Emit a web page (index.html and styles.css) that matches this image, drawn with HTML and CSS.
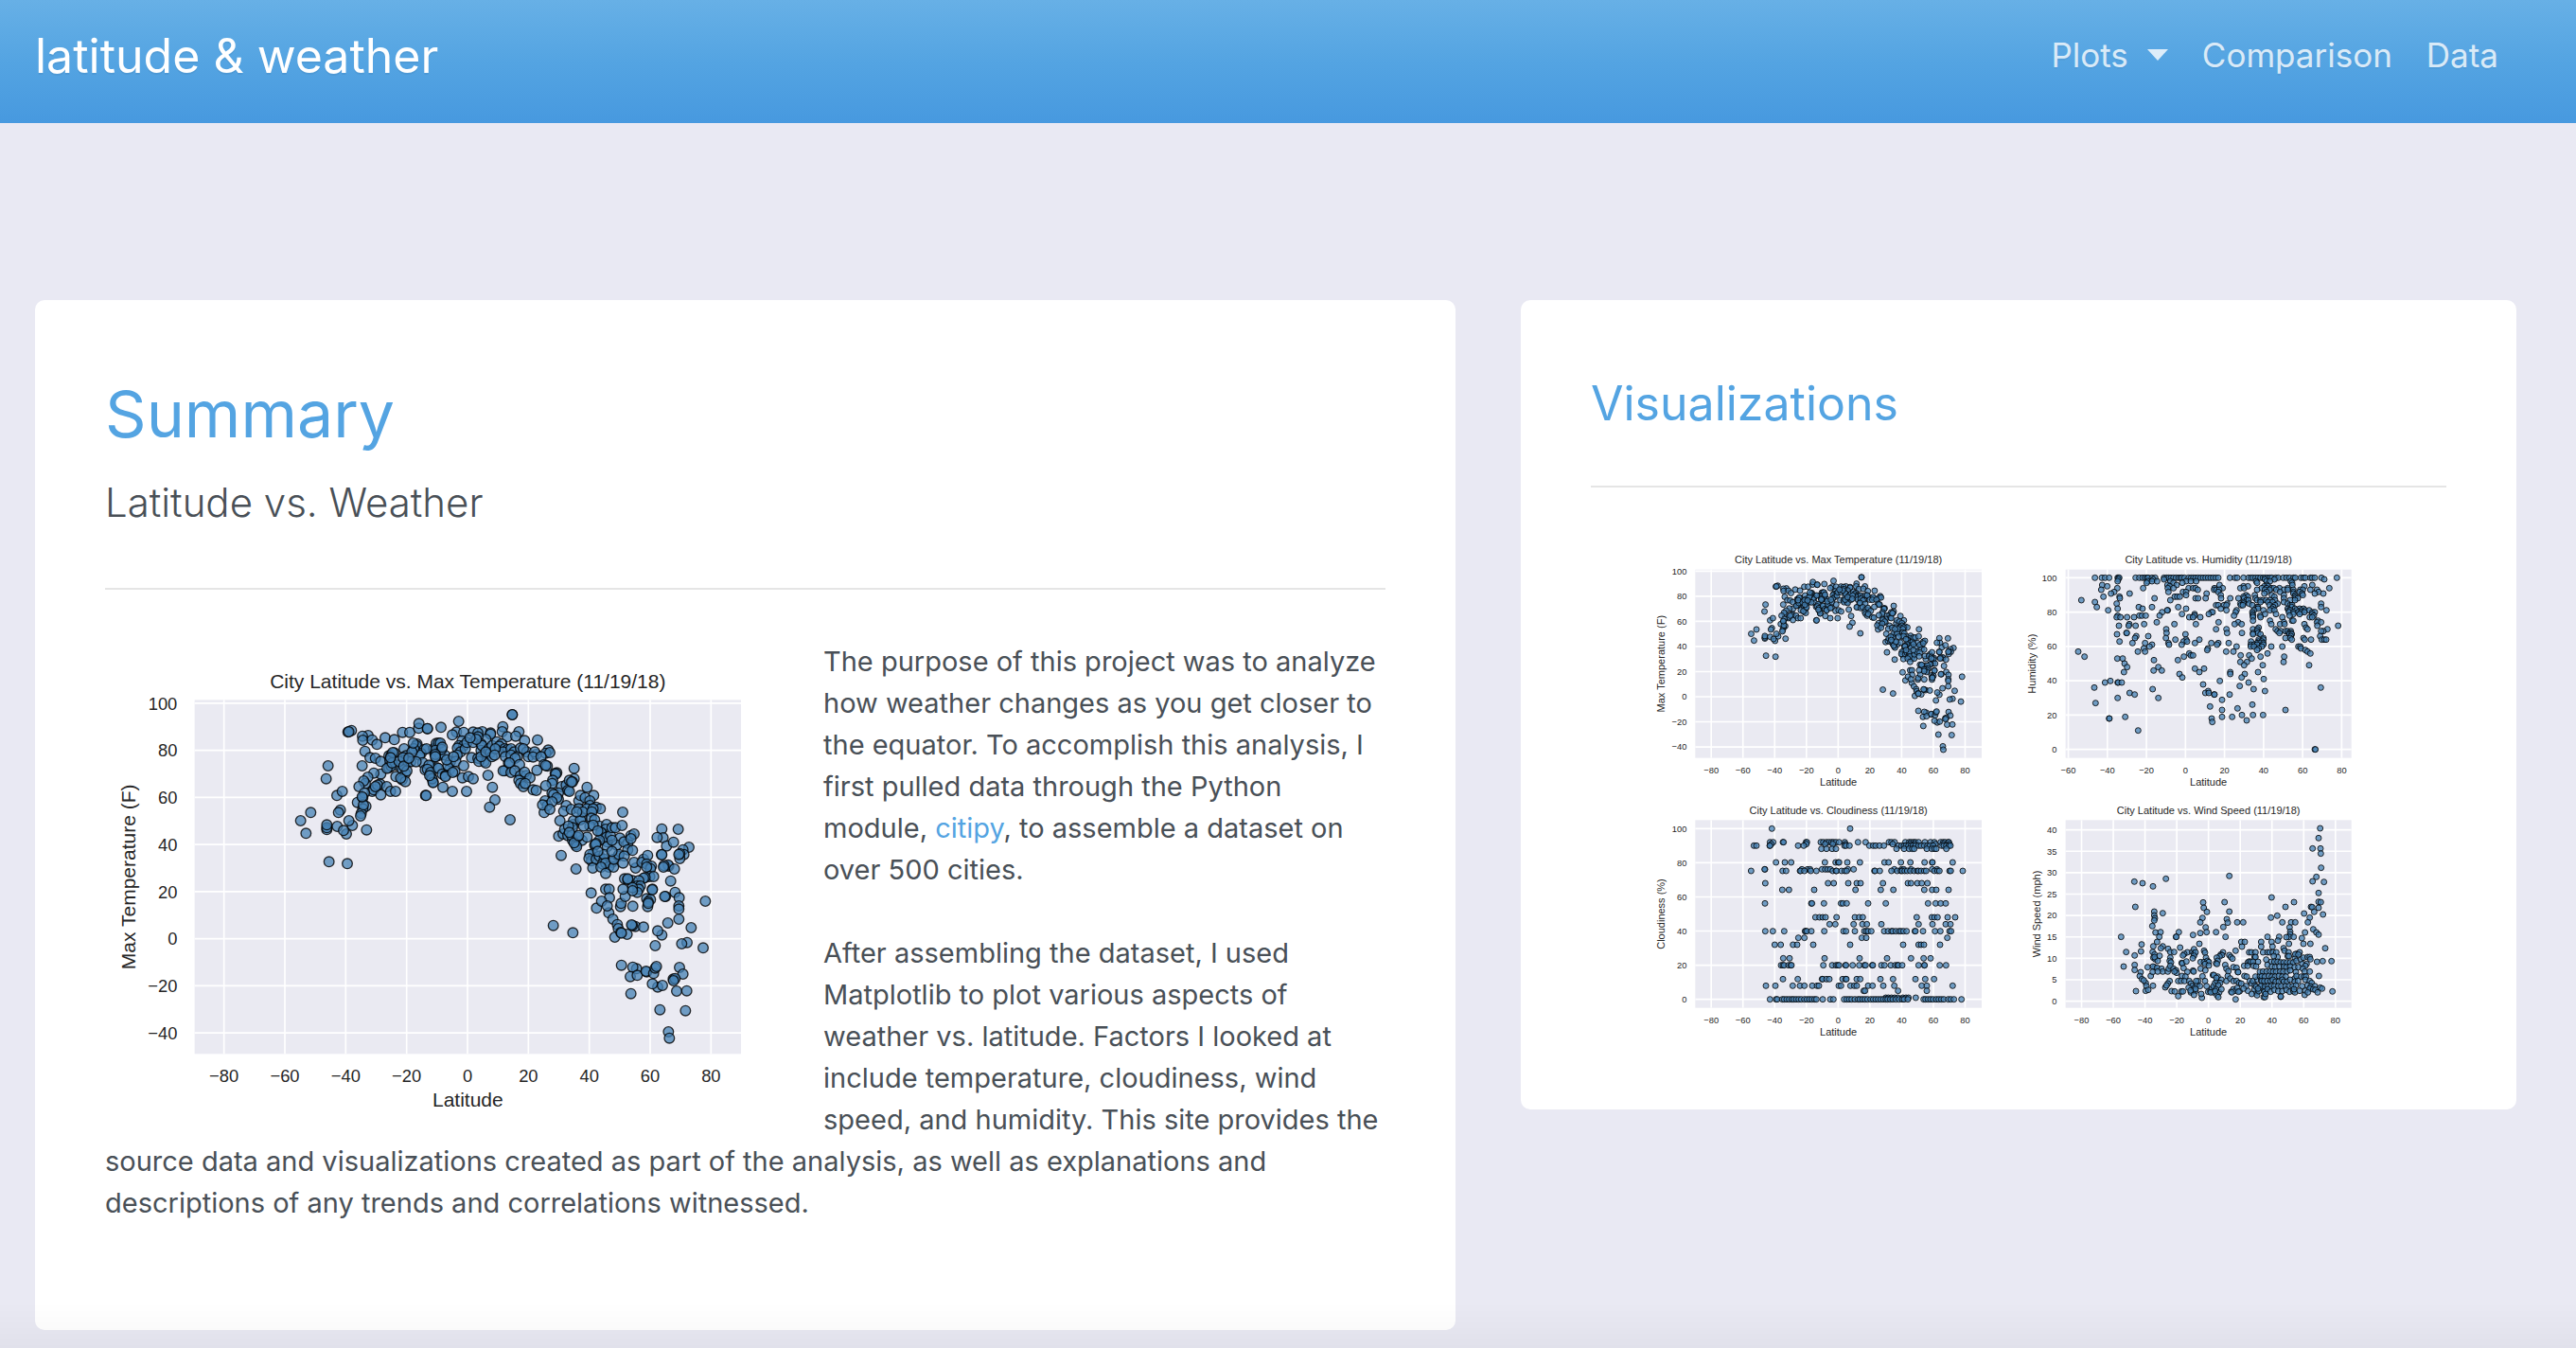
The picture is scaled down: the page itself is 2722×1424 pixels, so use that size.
FILE: index.html
```html
<!DOCTYPE html>
<html lang="en">
<head>
<meta charset="utf-8">
<meta name="viewport" content="width=device-width, initial-scale=1">
<title>latitude &amp; weather</title>
<link rel="stylesheet" href="styles.css">
</head>
<body>
<nav class="navbar">
  <a class="brand" href="#">latitude &amp; weather</a>
  <div class="nav-links">
    <button class="nav-link dropdown" type="button" aria-haspopup="true">Plots<span class="caret"></span></button>
    <a class="nav-link" href="#">Comparison</a>
    <a class="nav-link" href="#">Data</a>
  </div>
</nav>
<main class="columns">
  <section class="card">
    <h1 class="title">Summary</h1>
    <h2 class="subtitle">Latitude vs. Weather</h2>
    <hr class="rule">
    <div class="story">
      <svg class="chart chart-main" data-chart="temperatureLarge" viewBox="33 0 2130 1470" role="img" aria-label="City Latitude vs. Max Temperature"></svg>
      <p class="text">The purpose of this project was to analyze how weather changes as you get closer to the equator. To accomplish this analysis, I first pulled data through the Python module, <a class="link" href="#">citipy</a>, to assemble a dataset on over 500 cities.</p>
      <p class="text">After assembling the dataset, I used Matplotlib to plot various aspects of weather vs. latitude. Factors I looked at include temperature, cloudiness, wind speed, and humidity. This site provides the source data and visualizations created as part of the analysis, as well as explanations and descriptions of any trends and correlations witnessed.</p>
    </div>
  </section>
  <section class="card">
    <h2 class="heading">Visualizations</h2>
    <hr class="rule">
    <div class="gallery">
      <a href="#"><svg class="chart" data-chart="temperature" viewBox="0 0 1110 795" role="img" aria-label="City Latitude vs. Max Temperature"></svg></a>
      <a href="#"><svg class="chart" data-chart="humidity" viewBox="0 0 1110 795" role="img" aria-label="City Latitude vs. Humidity"></svg></a>
      <a href="#"><svg class="chart" data-chart="cloudiness" viewBox="0 0 1110 795" role="img" aria-label="City Latitude vs. Cloudiness"></svg></a>
      <a href="#"><svg class="chart" data-chart="wind" viewBox="0 0 1110 795" role="img" aria-label="City Latitude vs. Wind Speed"></svg></a>
    </div>
  </section>
</main>
<script src="charts.js"></script>
</body>
</html>
```
FILE: styles.css
```css
* { box-sizing: border-box; }

body {
  margin: 0;
  background: #e9e9f3;
  color: #495057;
  font-family: Inter, "Liberation Sans", sans-serif;
  font-size: 29px;
  line-height: 44px;
}

/* Faint shade along the bottom edge of the window */
body::after {
  content: "";
  position: fixed;
  right: 0;
  bottom: 0;
  left: 0;
  height: 48px;
  background: linear-gradient(rgba(0, 0, 0, 0), rgba(0, 0, 0, 0.03));
  pointer-events: none;
}

.navbar {
  display: flex;
  align-items: flex-start;
  justify-content: space-between;
  height: 130px;
  padding: 26px 64px 0 37px;
  background: linear-gradient(#67b0e6, #54a4e2 50%, #4799df);
  text-shadow: 0 2px 0 rgba(0, 0, 0, 0.05);
}

.brand {
  color: #fff;
  font-size: 50px;
  line-height: 66px;
  text-decoration: none;
}

.nav-links { display: flex; }

.nav-link {
  display: flex;
  align-items: center;
  padding: 0 18px;
  border: 0;
  background: none;
  color: rgba(255, 255, 255, 0.8);
  font: inherit;
  font-size: 35px;
  line-height: 64px;
  text-decoration: none;
  text-shadow: inherit;
}

.caret {
  margin-left: 20px;
  border: 11px solid transparent;
  border-top-width: 12px;
  border-top-color: currentColor;
  border-bottom: 0;
}

.columns {
  display: grid;
  grid-template-columns: 1501fr 1052fr;
  gap: 69px;
  align-items: start;
  padding: 187px 63px 20px 37px;
}

.card {
  padding: 72px 74px;
  border-radius: 10px;
  background: #fff;
}

.title, .heading, .subtitle { margin: 0; }

.title {
  color: #54a4e2;
  font-size: 68px;
  font-weight: 400;
  line-height: 96px;
}

.subtitle {
  margin-top: 18px;
  font-size: 42px;
  font-weight: 300;
  line-height: 56px;
}

.heading {
  color: #54a4e2;
  font-size: 50px;
  font-weight: 400;
  line-height: 74px;
}

.rule {
  height: 2px;
  margin: 62px 0 54px;
  border: 0;
  background: #e5e5e5;
}

.heading + .rule { margin: 50px 0 55px; }

.story { padding-bottom: 40px; }

.story::after {
  content: "";
  display: block;
  clear: both;
}

.text { margin: 0 0 44px; }
.text:last-child { margin-bottom: 0; }

.link { color: #54a4e2; text-decoration: none; }

.gallery {
  display: grid;
  grid-template-columns: 1fr 1fr;
  column-gap: 20px;
  padding: 0 85px 0 59px;
}

.chart {
  display: block;
  width: 100%;
  font-family: "Liberation Sans", Arial, sans-serif;
  fill: #262626;
}

.chart-main {
  float: left;
  width: 710px;
  max-width: 55%;
  margin: 14px 49px 10px 0;
}

.plot { fill: #eaeaf2; }
.grid { stroke: #fff; stroke-width: 5; }
.dot { fill: #4682b4; fill: rgba(70, 130, 180, 0.75); stroke: rgba(0, 0, 0, 0.8); stroke-width: 3; }
.chart-title, .axis-title { font-size: 33px; text-anchor: middle; }
.tick { font-size: 28px; }
.tick-x { text-anchor: middle; }
.tick-y { text-anchor: end; }
.chart-main .chart-title, .chart-main .axis-title { font-size: 63px; }
.chart-main .tick { font-size: 55px; }
.chart-main .dot { stroke-width: 4; }
```
FILE: charts.js
```js
// Each point list is "x,y x,y ..." in the units of its chart's viewBox.
const pairs = (text, dx = 0) => text.trim().split(/\s+/).map(p => {
  const [x, y] = p.split(",").map(Number);
  return [x + dx, y];
});
// Rows share one value: "y: x x x".
const rows = text => text.trim().split("\n").flatMap(line => {
  const [y, xs] = line.split(":");
  return xs.trim().split(/\s+/).map(x => [Number(x), Number(y)]);
});

const southern = pairs(`
740,354 734,395 768,448 785,435 685,502 653,528 670,568 779,494 773,502 743,658 801,664 736,556 736,550 736,541
769,546 817,543 806,528 798,570 789,559 862,557 814,242 803,247 806,246 867,258 849,260 850,273 880,272 895,286
921,265 950,271 976,248 999,248 1027,235 1028,220 1055,236 857,308 873,328 890,330 907,340 848,354 933,322 940,320
950,313 936,337 933,360 960,352 981,300 987,322 1018,295 1022,285 1020,290 1045,302 1035,315 1030,320 985,335 990,342
1002,341 1040,344 1019,341 1067,354 907,380 885,377 940,355 927,362 975,365 985,378 955,388 975,398 985,404 970,393
990,370 866,390 858,410 853,402 838,420 880,435 905,412 885,430 897,415 907,446 926,420 938,435 954,435 833,470
855,440 850,455 860,482 850,490 845,505 843,513 852,478 848,452 1048,367 1067,390 1073,406 1049,448 1075,300 1078,315
1082,325 1085,360 943,345 965,340 978,328 1012,300 1006,310 945,312 938,328 1083,283 1010,282 980,355 996,330 890,420`);
const northern = pairs(`
5,236 48,232 104,213 97,247 84,256 150,247 120,248 179,246 165,250 205,250 205,254 190,270 165,262 244,230 242,246
295,246 258,262 285,260 274,192 274,192 313,274 354,272 388,304 380,314 393,312 40,282 46,282 30,305 45,320 60,320
50,302 30,318 52,295 115,275 105,290 120,290 100,298 110,310 99,320 125,300 130,280 145,328 150,280 175,285 175,305
178,290 200,300 205,312 210,290 225,278 240,285 233,292 250,300 260,302 245,310 252,325 270,300 280,310 270,320
262,345 290,325 283,330 300,298 320,310 309,300 325,325 350,318 345,310 340,326 365,325 375,350 385,355 380,353
415,376 410,378 412,380 402,400 400,410 2,300 10,352 5,365 15,375 20,395 23,407 40,362 52,380 75,365 62,385 62,388
78,340 70,353 92,372 85,375 95,340 120,354 116,392 135,388 150,395 54,422 84,435 129,435 1,448 185,340 165,330
168,340 190,345 197,384 175,325 210,325 250,370 245,370 265,345 270,375 297,350 282,370 300,385 318,385 313,374
330,392 295,400 300,410 309,420 315,410 340,430 350,432 352,368 211,422 219,462 202,485 267,525 380,417 430,420
445,415 450,432 455,435 470,395 455,400 465,405 462,405 470,362 420,440 400,440 405,445 420,460 415,455 378,465
375,502 385,480 370,478 400,468 393,492 445,480 437,498 461,492 425,528 421,577 435,570 440,555 450,575 465,590
475,605 495,590 511,580 467,540 468,528 465,550 462,575 480,580 478,610 470,598 484,575 495,520 490,525 511,422
532,448 485,465 490,448 505,455 520,465 520,480 485,490 510,490 497,500 540,485 553,490 530,490 526,500 525,520
535,525 520,545 550,545 530,542 573,540 570,555 560,570 555,565 575,595 573,580 575,610 550,590 535,605 540,600
538,603 585,575 590,550 601,550 622,543 624,501 615,583 605,605 640,600 628,595 650,575 660,570 650,585 640,620
655,622 530,632 520,635 525,655 517,648 540,650 550,640 565,650 565,635 560,665 590,660 580,675 570,662 610,640
595,675 596,650 612,635 629,640 625,662 529,678 555,675 570,695 665,678 660,660 690,650 685,660 703,638 700,665
715,672 712,680 700,675 710,705 722,705 695,708 429,638 476,681 524,757 541,805 570,745 581,745 582,772 557,783
580,820 575,798 593,840 607,857 617,800 619,790 632,768 610,870 599,897 638,888 618,882 620,884 630,712 655,718
640,715 640,712 690,710 675,718 670,735 680,735 675,745 670,755 655,740 655,750 625,745 718,745 718,747 700,775
712,778 703,800 705,785 705,790 656,799 404,860 466,883 664,863 655,860 652,858 690,865 748,890 735,877 727,924
767,852 748,554 800,555 752,582 733,581 763,608 785,596 834,612 747,635 748,636 815,620 818,635 805,648 805,632
802,635 770,672 768,668 755,670 753,675 788,681 776,719 790,755 803,772 760,768 757,768 802,798 802,808 802,840
886,783 841,867 828,914 811,918 879,931 804,993 815,1014 620,986 668,997 656,992 648,1022 670,1018 650,1076 700,1007
698,1005 722,1012 727,995 731,990 735,1055 750,1050 718,1045 784,1030 790,1028 785,1035 795,1068 827,1067 742,1127
823,1130 769,1197 772,1217 30,325 66,335 88,325 12,385 220,300 190,310 160,270 140,265 218,320 452,545 455,565
545,560 590,590 590,625 545,625 500,545 478,500`, 1050);
const temperatureLarge = southern.concat(northern);

// The thumbnail shows the same cities at a smaller scale.
const temperature = temperatureLarge.map(([x, y]) => [607 + (x - 1182) * 0.521, 498 + (y - 902) * 0.533]);

const humidity = rows(`
121: 251 273 283 296 323 326 328 380 392 402 410 416 420 432 442 470 478 485 492 500 508 516 522 527 535 548 556 563 570 578 586 594 602 610 618 626 634 642 679 695 702 722 738 746 752 760 768 776 784 790 798 806 812 824 832 848 858 868 880 886 904 912 918 934 940 948 969 1018
126: 978 325 436 470 790 820
132: 323 418 432 448 490 540 555 572 762 795 806 872
137: 415 500 528 765 876
144: 274 481 510 646 796 877 940
148: 290 488 722 736 788 800 915
154: 322 404 482 500 548 562 570 630 656 712 724 780 795 810 818 836 862 994
159: 271 577 629 636 645 765 790 805 826 850 862 880 902 910 934 955
166: 312 484 530 540 642 795 838 880 900 960
171: 302 361 605 788 880 908 948 975
176: 540 650 730 758 812 850 886 910
181: 278 329 504 512 520 722 736 820 885
186: 330 440 570 578 602 651 680 706 724 760 850 886 894
192: 208 490 732 738 765 776 784 794 806 822 870 885
198: 251 722 776 800 814 850
203: 320 670 712 722 740 830 862 968
208: 635 642 660 668 714 720 750 805 822 870 876
214: 257 390 432 515 764 768 816 875 968
219: 323 402 540 650 768 812 862 885 900 912
224: 293 482 480 668 700 755 785 806 820 865 870 890 905 918 930 985
230: 464 620 624 697 750 866 880 896 905 915 940 948
236: 527 567 612 751 790 825 880 900 940
241: 323 392 400 412 456 567 692 752 775 868 945
246: 320 332 353 375 550 562 585 752 776 845 932 940
257: 752 806 876 880 958
262: 447 643 705 850 955 968
268: 360 407 503 571 694 716 810 838 852 915
273: 327 358 380 956 1022
279: 770 920
284: 477 635 668 752 766 824 925 988
290: 765 830 840 855 862 872 975 968
296: 351 352 478 670 717 752 768 836 866 873
300: 321 538 752 776 868 875
306: 382 420 872 965
312: 378 476 785 855 870 912
317: 506 582 540 770 785 875 916 936 970 978 984
323: 329 532 543 746 770 780
328: 370 410 484 568 620 642 675 765 775 785
333: 432 486 526 638 745 755 765 785
339: 424 700 745 755 780 810 845 896 902
345: 406 609 770 904
350: 607 765 918
355: 198 387 410 667 690 925
361: 550 798 934
367: 555 562 713 740
371: 218 533 776 851
377: 322 339 748
382: 438 514
388: 712 733 849
393: 345
398: 724 783 930
404: 353 452
409: 568 597
415: 437 463
420: 343 582 680 768
426: 519 726 680
437: 528 716
442: 786
448: 300 647
453: 283 323 325 336 738
459: 594
464: 710
469: 249 967
474: 434 754
480: 610 790
486: 361 601 612
491: 377 629 630 678
502: 323 452
508: 654
518: 253
523: 750
529: 616
535: 703
540: 654 855
556: 717 752 784
562: 347 654 686
567: 296 297 621
573: 732
578: 623
605: 388
665: 948 950`);

const cloudiness = rows(`
121: 397 645
164: 391 401 432 434 505 508 552 560 570 578 586 592 600 610 628 670 694 768 776 786 820 832 838 846 852 862 882 900 912 932 940 946 956 958
170: 395 506 566 590 630 780 835 850 915 940 960
175: 340 348 390 391 480 498 627 632 643 706 718 726 738 752 798 808 816 822 830 838 844 852 862 870 880 890 898 908 935 942 950 958 963
185: 554 570 588 600 792 816 832 842 848 888 904 912 918 950
228: 410 438 458 565 599 607 610 636 676 754 767 806 836 881 905 906 970
250: 375 374 492 510 518 556 566 574 582 638 656 785 808 815 838 905 920
255: 331 431 442 486 488 500 520 538 590 600 602 618 628 634 722 724 739 776 794 806 810 818 826 836 848 858 862 870 880 886 912 922 928 960 964 1002
294: 376 575 593 639 666 678 749 828 838 858 872 890
315: 430 451 531 662 742 782 880 905 918 957
358: 375 522 524 562 616 622 634 702 758 892 916 932 948
402: 535 548 558 567 602 660 674 685 856 904 912 922 954 978
424: 580 598 656 684 698 744 862 906 948 963
446: 376 400 436 502 504 508 522 563 624 632 660 690 696 702 712 753 765 776 780 790 800 806 814 824 850 852 876 914 931 960 965
467: 481 500 682 696 953
489: 406 425 464 477 528 645 813 862 870 879 930
532: 433 453 564 675 762 838 878 900
554: 426 432 436 450 457 459 560 588 600 606 610 630 632 653 674 690 694 715 717 744 754 774 788 795 798 810 862 880 881 929 949
598: 432 479 556 558 570 579 621 631 633 666 677 741 781 852 883 911
619: 378 408 463 486 500 525 540 546 609 616 646 658 666 702 716 750 785 872 888 970
635: 688 692 797 888
657: 758 766 776 786 796 812 822 830 853
662: 391 410 414 430 436 444 452 460 466 474 482 490 500 508 516 524 532 538 558 582 592 626 634 642 650 660 670 676 684 692 700 710 718 726 734 742 750 758 764 772 780 790 800 810 816 828 878 884 892 900 908 918 926 934 942 956 964 974 998`);

const wind = pairs(`
965,120 960,151 941,184 966,184 967,200 968,245 953,274 941,288 977,290 960,325 376,289 402,294 435,304 476,280
677,271 379,369 439,384 439,396 441,405 439,412 433,430 466,389 594,355 596,372 606,385 592,404 585,418 662,354
677,384 669,408 672,419 702,418 721,418 658,433 602,434 605,449 635,449 585,452 562,458 665,464 811,339 882,354
855,369 829,397 809,403 845,418 873,418 886,418 868,434 870,448 870,456 866,464 881,464 858,465 960,353 967,354
960,372 936,369 940,370 946,385 932,403 926,418 914,390 974,393 943,440 953,450 960,457 917,450 907,468 912,486
934,486 981,500 1001,541 955,543 973,541 1004,637 334,464 350,512 342,558 381,636 443,450 459,449 455,464 517,449
508,464 509,464 448,480 399,488 397,510 377,523 436,494 466,494 460,500 483,502 490,512 502,512 521,498 377,553
377,569 396,576 393,588 400,598 418,560 440,560 434,512 440,520 436,530 442,535 456,524 450,540 440,528 490,530
488,540 492,545 526,547 528,548 541,542 544,513 534,518 530,523 560,512 565,503 565,518 570,513 565,524 561,532
582,486 597,508 600,514 603,530 586,544 597,544 608,540 612,544 600,550 586,565 435,558 448,562 462,565 466,574
428,588 434,575 450,574 482,574 485,565 490,556 500,565 508,570 510,578 503,574 532,563 544,575 562,571 564,574
527,588 538,590 592,589 601,570 515,604 524,604 535,604 488,604 482,612 474,624 478,618 412,610 414,620 412,635
420,632 406,602 435,619 494,636 504,637 515,652 525,637 530,637 550,604 555,612 560,620 568,625 575,615 578,604
584,620 570,635 555,640 565,648 590,657 588,645 610,638 617,636 622,628 627,620 632,610 638,604 640,590 625,585
628,585 636,594 652,600 648,610 642,618 635,630 627,640 645,640 652,630 638,649 642,655 697,662 657,513 650,520
654,522 646,526 637,530 640,540 635,548 638,550 677,522 682,528 687,533 697,508 664,553 668,565 674,573 672,588
690,560 700,562 704,575 705,576 668,604 680,596 690,604 700,604 708,610 715,612 725,588 732,590 683,638 690,630
696,635 702,626 710,636 706,638 685,640 742,604 748,612 752,604 758,618 766,600 760,590 774,588 778,600 736,635
748,645 764,640 765,649 757,630 780,618 784,628 790,636 786,655 790,655 715,480 726,480 717,495 740,513 747,513
760,513 757,528 760,528 736,545 740,542 745,543 752,543 724,556 735,556 754,556 768,543 762,558 798,464 778,480
778,495 811,480 814,495 835,464 831,476 866,486 849,500 852,508 784,513 798,513 805,513 815,513 826,513 865,513
830,528 818,525 862,525 866,525 885,532 890,518 886,519 900,513 896,520 794,536 810,543 820,543 830,543 840,545
850,545 860,545 870,545 880,545 890,540 904,536 912,530 925,528 932,528 934,535 908,550 922,550 918,556 798,553
812,558 822,560 836,558 850,558 858,560 870,558 884,560 896,560 910,565 916,574 932,574 774,575 784,574 795,574
806,574 816,574 826,574 838,574 848,574 860,574 870,570 888,576 780,589 790,590 802,588 812,590 822,590 834,588
845,590 856,590 884,596 890,588 905,590 914,590 920,590 780,604 788,604 798,604 808,604 815,600 824,606 834,606
845,600 850,606 860,606 870,600 884,606 895,604 918,600 932,604 938,610 961,588 762,622 776,620 790,622 800,620
810,620 820,620 832,620 842,620 855,620 866,620 878,620 888,618 908,620 925,618 935,622 948,620 965,625 971,628
770,636 788,638 798,630 808,638 820,632 832,636 845,636 858,632 868,638 880,636 885,640 882,630 900,635 918,635
932,628 943,630 950,632 957,640 916,648 926,640 840,654 840,653 792,645 730,620 722,628 768,628 612,555 572,604
548,625 570,629 554,634 600,604 618,640 632,636 605,620`);

const latFull = [-80, -60, -40, -20, 0, 20, 40, 60, 80];
const specs = {
  temperatureLarge: {
    title: "City Latitude vs. Max Temperature (11/19/18)", yTitle: "Max Temperature (F)", points: temperatureLarge,
    box: [317, 145, 2049, 1267], x: latFull, x0: 1182, xStep: 9.65, y: [-40, -20, 0, 20, 40, 60, 80, 100], y0: 902, yStep: 7.464,
    r: 16, titleY: 109, yTitleX: 130, xTickY: 1357, xTitleY: 1435, yTickX: 262, tickDrop: 20
  },
  temperature: {
    title: "City Latitude vs. Max Temperature (11/19/18)", yTitle: "Max Temperature (F)", points: temperature,
    box: [154, 95, 1062, 692], x: latFull, x0: 607, xStep: 5.03, y: [-40, -20, 0, 20, 40, 60, 80, 100], y0: 498, yStep: 3.979,
    yTitleX: 58, xTickY: 740, xTitleY: 781, yTickX: 127
  },
  humidity: {
    title: "City Latitude vs. Humidity (11/19/18)", yTitle: "Humidity (%)", points: humidity,
    box: [158, 95, 1064, 692], x: [-60, -40, -20, 0, 20, 40, 60, 80], x0: 538, xStep: 6.19, y: [0, 20, 40, 60, 80, 100], y0: 665, yStep: 5.44,
    yTitleX: 62, xTickY: 740, xTitleY: 781, yTickX: 130
  },
  cloudiness: {
    title: "City Latitude vs. Cloudiness (11/19/18)", yTitle: "Cloudiness (%)", points: cloudiness,
    box: [154, 94, 1062, 689], x: latFull, x0: 607, xStep: 5.03, y: [0, 20, 40, 60, 80, 100], y0: 662, yStep: 5.41,
    yTitleX: 58, xTickY: 737, xTitleY: 778, yTickX: 127
  },
  wind: {
    title: "City Latitude vs. Wind Speed (11/19/18)", yTitle: "Wind Speed (mph)", points: wind,
    box: [158, 94, 1064, 689], x: latFull, x0: 611, xStep: 5.03, y: [0, 5, 10, 15, 20, 25, 30, 35, 40], y0: 668, yStep: 13.58,
    yTitleX: 78, xTickY: 737, xTitleY: 778, yTickX: 130
  }
};

const label = n => String(n).replace("-", "\u2212");

function draw(svg) {
  const s = { r: 9, titleY: 76, tickDrop: 10, ...specs[svg.dataset.chart] };
  const [l, t, r, b] = s.box;
  const mid = (l + r) / 2, midY = (t + b) / 2;
  let out = `<rect class="plot" x="${l}" y="${t}" width="${r - l}" height="${b - t}"/>`;
  for (const v of s.x) {
    const x = s.x0 + v * s.xStep;
    out += `<path class="grid" d="M${x} ${t}V${b}"/><text class="tick tick-x" x="${x}" y="${s.xTickY}">${label(v)}</text>`;
  }
  for (const v of s.y) {
    const y = s.y0 - v * s.yStep;
    out += `<path class="grid" d="M${l} ${y}H${r}"/><text class="tick tick-y" x="${s.yTickX}" y="${y + s.tickDrop}">${label(v)}</text>`;
  }
  for (const [x, y] of s.points) out += `<circle class="dot" cx="${x}" cy="${y}" r="${s.r}"/>`;
  out += `<text class="chart-title" x="${mid}" y="${s.titleY}">${s.title}</text>`;
  out += `<text class="axis-title" x="${mid}" y="${s.xTitleY}">Latitude</text>`;
  out += `<text class="axis-title" transform="translate(${s.yTitleX} ${midY}) rotate(-90)">${s.yTitle}</text>`;
  svg.innerHTML = out;
}

document.querySelectorAll("[data-chart]").forEach(draw);
```
